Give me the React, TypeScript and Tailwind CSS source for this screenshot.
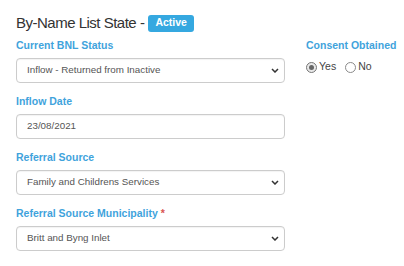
import React from "react";

const Chevron = () => (
  <svg width="8" height="5" viewBox="0 0 8 5" className="shrink-0">
    <path d="M1 1 L4 4 L7 1" fill="none" stroke="#333" strokeWidth="1.5" />
  </svg>
);

const Label = ({ children, req }: { children: React.ReactNode; req?: boolean }) => (
  <div className="h-[14px] leading-[14px] text-[10.5px] font-bold text-[#3fa3dc]">
    {children}
    {req && <span className="text-[#d9534f]"> *</span>}
  </div>
);

const Select = ({ value }: { value: string }) => (
  <div className="mt-[6px] h-[25px] w-full rounded-[4px] border border-[#cccccc] bg-white flex items-center justify-between pl-[10px] pr-[5px] shadow-[inset_0_1px_1px_rgba(0,0,0,0.05)]">
    <span className="text-[9.8px] text-[#555]">{value}</span>
    <Chevron />
  </div>
);

const Input = ({ value }: { value: string }) => (
  <div className="mt-[6px] h-[25px] w-full rounded-[4px] border border-[#cccccc] bg-white flex items-center pl-[10px] shadow-[inset_0_1px_1px_rgba(0,0,0,0.05)]">
    <span className="text-[9.8px] text-[#555]">{value}</span>
  </div>
);

export default function App() {
  return (
    <div
      className="w-[404px] h-[266px] bg-white pl-[16px] pt-[13px]"
      style={{ fontFamily: '"Liberation Sans", Arial, sans-serif' }}
    >
      <div className="h-[20px] flex items-center">
        <span className="text-[15px] leading-[20px] text-[#333] tracking-[-0.5px]">By-Name List State -</span>
        <span className="ml-[4px] h-[17px] px-[7px] rounded-[3px] bg-[#35a8e0] text-white text-[10.5px] font-bold flex items-center">
          Active
        </span>
      </div>
      <div className="mt-[5px] flex">
        <div className="w-[269px] flex flex-col gap-[11px]">
          <div>
            <Label>Current BNL Status</Label>
            <Select value="Inflow - Returned from Inactive" />
          </div>
          <div>
            <Label>Inflow Date</Label>
            <Input value="23/08/2021" />
          </div>
          <div>
            <Label>Referral Source</Label>
            <Select value="Family and Childrens Services" />
          </div>
          <div>
            <Label req>Referral Source Municipality</Label>
            <Select value="Britt and Byng Inlet" />
          </div>
        </div>
        <div className="ml-[21px]">
          <Label>Consent Obtained</Label>
          <div className="mt-[8px] h-[14px] flex items-center text-[10.5px] text-[#444]">
            <span className="w-[11px] h-[11px] rounded-full border border-[#767676] bg-[#e8e8e8] flex items-center justify-center">
              <span className="w-[5px] h-[5px] rounded-full bg-[#666]" />
            </span>
            <span className="ml-[2px]">Yes</span>
            <span className="ml-[9px] w-[11px] h-[11px] rounded-full border border-[#8a8a8a] bg-white" />
            <span className="ml-[2px]">No</span>
          </div>
        </div>
      </div>
    </div>
  );
}
